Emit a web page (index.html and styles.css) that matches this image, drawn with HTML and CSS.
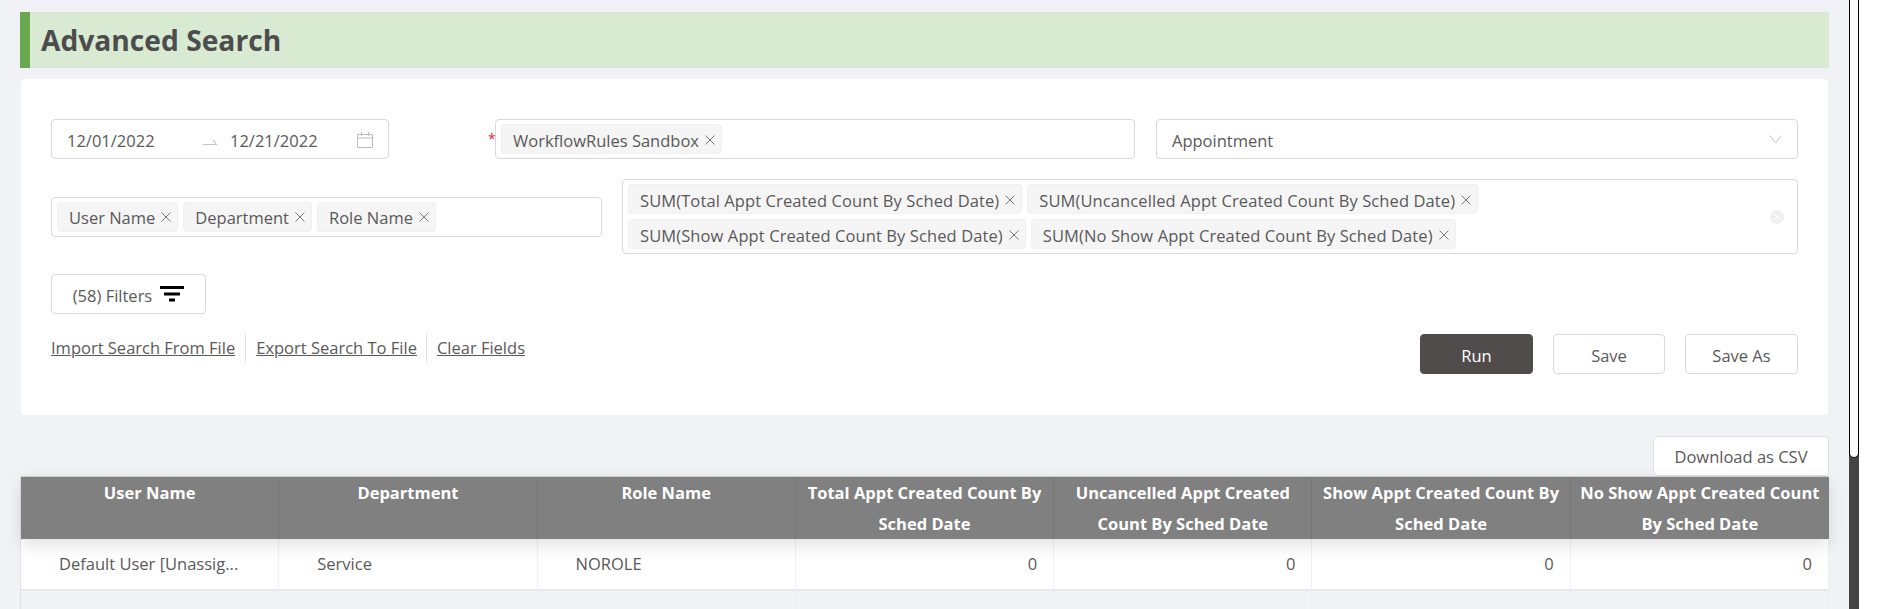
FILE: index.html
```html
<!DOCTYPE html>
<html lang="en">
<head>
<meta charset="utf-8">
<title>Advanced Search</title>
<link rel="stylesheet" href="styles.css">
</head>
<body>
<svg class="defs" width="0" height="0"><symbol id="x" viewBox="0 0 10 10"><path d="M.5.5l9 9M9.5.5l-9 9" fill="none" stroke="#777" stroke-width="1"/></symbol></svg>
<div class="page">
  <main class="main">
    <h1 class="title">Advanced Search</h1>
    <section class="card">
      <div class="row row-one">
        <div class="field date">
          <span class="date-val">12/01/2022</span>
          <svg class="date-arrow" width="14" height="7" viewBox="0 0 14 7"><path d="M0 5.5h13.5L10 1" fill="none" stroke="#c4c4c4" stroke-width="1.2"/></svg>
          <span class="date-val">12/21/2022</span>
          <svg class="date-cal" width="16" height="16" viewBox="0 0 16 16"><path d="M.5 2.5h15v13H.5zM.5 6h15M4.5 0v4M11.5 0v4" fill="none" stroke="#bdbdbd" stroke-width="1"/></svg>
        </div>
        <div class="req-wrap">
          <span class="star">*</span>
          <div class="field tags wf">
            <span class="tag">WorkflowRules Sandbox<svg class="x"><use href="#x"/></svg></span>
          </div>
        </div>
        <div class="field select">
          <span class="text">Appointment</span>
          <svg width="13" height="8" viewBox="0 0 13 8"><path d="M.5.5l6 7 6-7" fill="none" stroke="#bfbfbf" stroke-width="1"/></svg>
        </div>
      </div>
      <div class="row row-two">
        <div class="field tags group">
          <span class="tag">User Name<svg class="x"><use href="#x"/></svg></span>
          <span class="tag">Department<svg class="x"><use href="#x"/></svg></span>
          <span class="tag">Role Name<svg class="x"><use href="#x"/></svg></span>
        </div>
        <div class="field tags sums">
          <div class="sum-list">
            <div class="sum-row">
              <span class="tag">SUM(Total Appt Created Count By Sched Date)<svg class="x"><use href="#x"/></svg></span>
              <span class="tag">SUM(Uncancelled Appt Created Count By Sched Date)<svg class="x"><use href="#x"/></svg></span>
            </div>
            <div class="sum-row">
              <span class="tag">SUM(Show Appt Created Count By Sched Date)<svg class="x"><use href="#x"/></svg></span>
              <span class="tag">SUM(No Show Appt Created Count By Sched Date)<svg class="x"><use href="#x"/></svg></span>
            </div>
          </div>
          <span class="clear"><svg width="8" height="8" viewBox="0 0 8 8"><path d="M1.5 1.5l5 5M6.5 1.5l-5 5" stroke="#fff" stroke-width="1"/></svg></span>
        </div>
      </div>
      <button class="btn filters"><span class="text">(58) Filters</span>
        <svg width="24" height="16" viewBox="0 0 24 16"><path d="M0 1.5h24M4 8h16M9 14h6" stroke="#000" stroke-width="3"/></svg>
      </button>
      <div class="actions">
        <div class="links">
          <a class="link" href="#">Import Search From File</a>
          <a class="link" href="#">Export Search To File</a>
          <a class="link" href="#">Clear Fields</a>
        </div>
        <div class="buttons">
          <button class="btn run">Run</button>
          <button class="btn save-mid">Save</button>
          <button class="btn save">Save As</button>
        </div>
      </div>
    </section>
    <div class="download-row"><button class="btn download">Download as CSV</button></div>
    <section class="table">
      <div class="thead">
        <div class="th">User Name</div>
        <div class="th">Department</div>
        <div class="th">Role Name</div>
        <div class="th">Total Appt Created Count By<br>Sched Date</div>
        <div class="th">Uncancelled Appt Created<br>Count By Sched Date</div>
        <div class="th">Show Appt Created Count By<br>Sched Date</div>
        <div class="th">No Show Appt Created Count<br>By Sched Date</div>
      </div>
      <div class="tr white">
        <div class="td center">Default User [Unassig...</div>
        <div class="td">Service</div>
        <div class="td">NOROLE</div>
        <div class="td num">0</div>
        <div class="td num">0</div>
        <div class="td num">0</div>
        <div class="td num">0</div>
      </div>
      <div class="tr">
        <div class="td"></div><div class="td"></div><div class="td"></div><div class="td"></div><div class="td"></div><div class="td"></div><div class="td"></div>
      </div>
    </section>
  </main>
  <div class="scrollbar"><div class="thumb"></div></div>
  <div class="gutter"></div>
</div>
</body>
</html>
```

FILE: styles.css
```css
* { box-sizing: border-box; }
html, body { margin: 0; height: 100%; overflow: hidden; background: #fff; }
body { font-family: "Open Sans", "Liberation Sans", sans-serif; font-size: 16.5px; color: #595959; }
.defs { position: absolute; }
.page { display: flex; height: 609px; overflow: hidden; }
.main { width: 1849px; background: #f0f2f5; padding: 12px 21px 0 20px; flex: none; }
.title { margin: 0 -1px 11px 0; height: 56px; line-height: 57px; background: #d9ead3; border-left: 10px solid #6aa84f; padding-left: 11px; font-size: 28.2px; font-weight: 700; color: #4d4d4d; }
.card { background: #fff; border-radius: 4px; margin-left: 1px; height: 336px; padding: 40px 30px 0; }
.row { display: flex; }
.row-one { height: 40px; margin-bottom: 20px; }
.row-two { align-items: center; justify-content: space-between; margin-bottom: 20px; }
.field { border: 1px solid #d9d9d9; border-radius: 4px; background: #fff; display: flex; align-items: center; }
.date { width: 338px; height: 40px; padding: 2px 15px 0; flex: none; }
.date-val { width: 88px; white-space: nowrap; }
.date-arrow { margin: 4px 13px 0 48px; flex: none; }
.date-cal { margin: -1px 0 0 auto; flex: none; }
.req-wrap { display: flex; align-items: center; width: 647px; margin-left: 99px; margin-right: 21px; flex: none; }
.star { color: #e0284a; width: 7px; font-size: 14px; flex: none; margin-top: -2px; }
.tags { padding: 0 4px 0 5px; gap: 5px; }
.wf { flex: 1; height: 40px; }
.select { flex: 1; height: 40px; padding: 0 15px; justify-content: space-between; }
.text { padding-top: 2px; }
.tag { display: inline-flex; align-items: center; gap: 6px; height: 30px; padding: 2px 6px 0 11px; background: #f5f5f5; border: 1px solid #f0f0f0; border-radius: 4px; white-space: nowrap; flex: none; }
.sum-row .tag { letter-spacing: 0.1px; }
.x { width: 10px; height: 10px; flex: none; margin-top: -1px; }
.group { width: 551px; height: 40px; }
.sums { width: 1176px; height: 75px; padding-right: 13px; justify-content: space-between; }
.sum-list { display: flex; flex-direction: column; gap: 5px; }
.sum-row { display: flex; gap: 5px; }
.clear { width: 14px; height: 14px; border-radius: 50%; background: #f0f0f0; display: flex; align-items: center; justify-content: center; }
.btn { font: inherit; color: #595959; background: #fff; border: 1px solid #d9d9d9; border-radius: 4px; height: 40px; cursor: pointer; padding: 2px 0 0; }
.filters { display: flex; align-items: center; justify-content: center; gap: 8px; width: 155px; padding: 0; }
.actions { display: flex; justify-content: space-between; margin-top: 20px; }
.links { display: flex; height: 28px; align-items: center; }
.link { color: #595959; text-decoration: underline; padding: 0 10px; border-right: 1px solid #e0e0e8; height: 28px; line-height: 28px; }
.link:first-child { padding-left: 0; }
.link:nth-child(2) { padding-right: 9px; }
.link:last-child { border-right: 0; }
.buttons { display: flex; gap: 20px; }
.run { width: 113px; background: #504c4c; border-color: #504c4c; color: #fff; }
.save-mid { width: 112px; }
.save { width: 113px; }
.download-row { display: flex; justify-content: flex-end; height: 61px; padding-top: 21px; margin-right: -1px; }
.download { width: 176px; height: 40px; border-color: #e0e0e0; padding-top: 0; }
.table { width: 1809px; border-left: 1px solid #e0e0e6; }
.thead, .tr { display: grid; grid-template-columns: repeat(7, 1fr); }
.thead { height: 63px; background: #808080; border-top: 1px solid #ccc; position: relative; z-index: 1; box-shadow: 0 6px 16px rgba(0,0,0,.12); }
.th { color: #fff; font-weight: 700; text-align: center; line-height: 31px; border-right: 1px solid #777; white-space: nowrap; }
.th:last-child { border-right: 0; }
.tr { height: 52px; border-bottom: 2px solid #e8e8ee; }
.white { background: #fff; }
.td { border-right: 1px solid #f0f0f0; padding: 0 16px 0 38px; line-height: 50px; }
.center { text-align: center; padding: 0 2px 0 0; }
.num { text-align: right; }
.scrollbar { width: 10px; background: #444; flex: none; height: 609px; }
.thumb { height: 458px; background: #fbfbfb; border: 1px solid #000; border-top: 0; border-radius: 0 0 5px 5px; }
.gutter { flex: 1; background: #fff; }
```
